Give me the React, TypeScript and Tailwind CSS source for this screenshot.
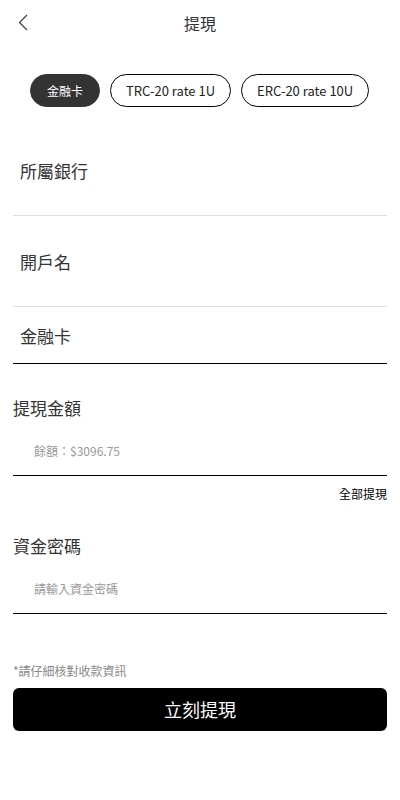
import React from 'react';

const font = { fontFamily: '"Noto Sans CJK TC", "Noto Sans", sans-serif' };

const tabs = ['金融卡', 'TRC-20 rate 1U', 'ERC-20 rate 10U'];

export default function App() {
  return (
    <div className="w-[400px] min-h-[800px] bg-white text-[#333]" style={font}>
      {/* Header */}
      <div className="relative h-[46px] flex items-center justify-center">
        <button className="absolute left-[16px] top-[13px] w-[14px] h-[18px] flex items-center justify-center">
          <svg width="10" height="17" viewBox="0 0 10 17" fill="none">
            <path d="M9 1L1.5 8.5L9 16" stroke="#444" strokeWidth="1.3" />
          </svg>
        </button>
        <h1 className="text-[16px] leading-[22px] text-[#333]">提現</h1>
      </div>

      {/* Tabs */}
      <div className="pt-[28px] flex pl-[30px] gap-[10px]">
        {tabs.map((t, i) => (
          <div
            key={t}
            className={
              i === 0
                ? 'h-[33px] px-[16px] rounded-full bg-[#333] border border-[#333] text-white text-[12px] flex items-center'
                : 'h-[33px] px-[15px] rounded-full border border-black text-[#222] text-[13px] flex items-center'
            }
          >
            {t}
          </div>
        ))}
      </div>

      {/* Bank rows */}
      <div className="mx-[13px]">
        <div className="h-[109px] pt-[52px] pl-[7px] border-b border-[#ddd] text-[17px] leading-[24px]">所屬銀行</div>
        <div className="h-[91px] pt-[34px] pl-[7px] border-b border-[#ddd] text-[17px] leading-[24px]">開戶名</div>
        <div className="h-[57px] pt-[17px] pl-[7px] border-b border-black text-[17px] leading-[24px]">金融卡</div>

        {/* Amount */}
        <div className="mt-[32px] text-[17px] leading-[24px]">提現金額</div>
        <div className="mt-[22px] pl-[21px] pb-[15px] border-b border-black text-[12px] leading-[18px] text-[#999]">
          餘額：$3096.75
        </div>
        <div className="mt-[9px] text-right text-[12px] leading-[18px] text-black">全部提現</div>

        {/* Password */}
        <div className="mt-[31px] text-[17px] leading-[24px]">資金密碼</div>
        <div className="mt-[22px] pl-[21px] pb-[15px] border-b border-black text-[12px] leading-[18px] text-[#999]">
          請輸入資金密碼
        </div>

        <p className="mt-[48px] text-[12px] leading-[18px] text-[#888]">*請仔細核對收款資訊</p>
        <button className="mt-[8px] w-full h-[43px] rounded-[6px] bg-black text-white text-[18px] flex items-center justify-center">
          立刻提現
        </button>
      </div>
    </div>
  );
}
